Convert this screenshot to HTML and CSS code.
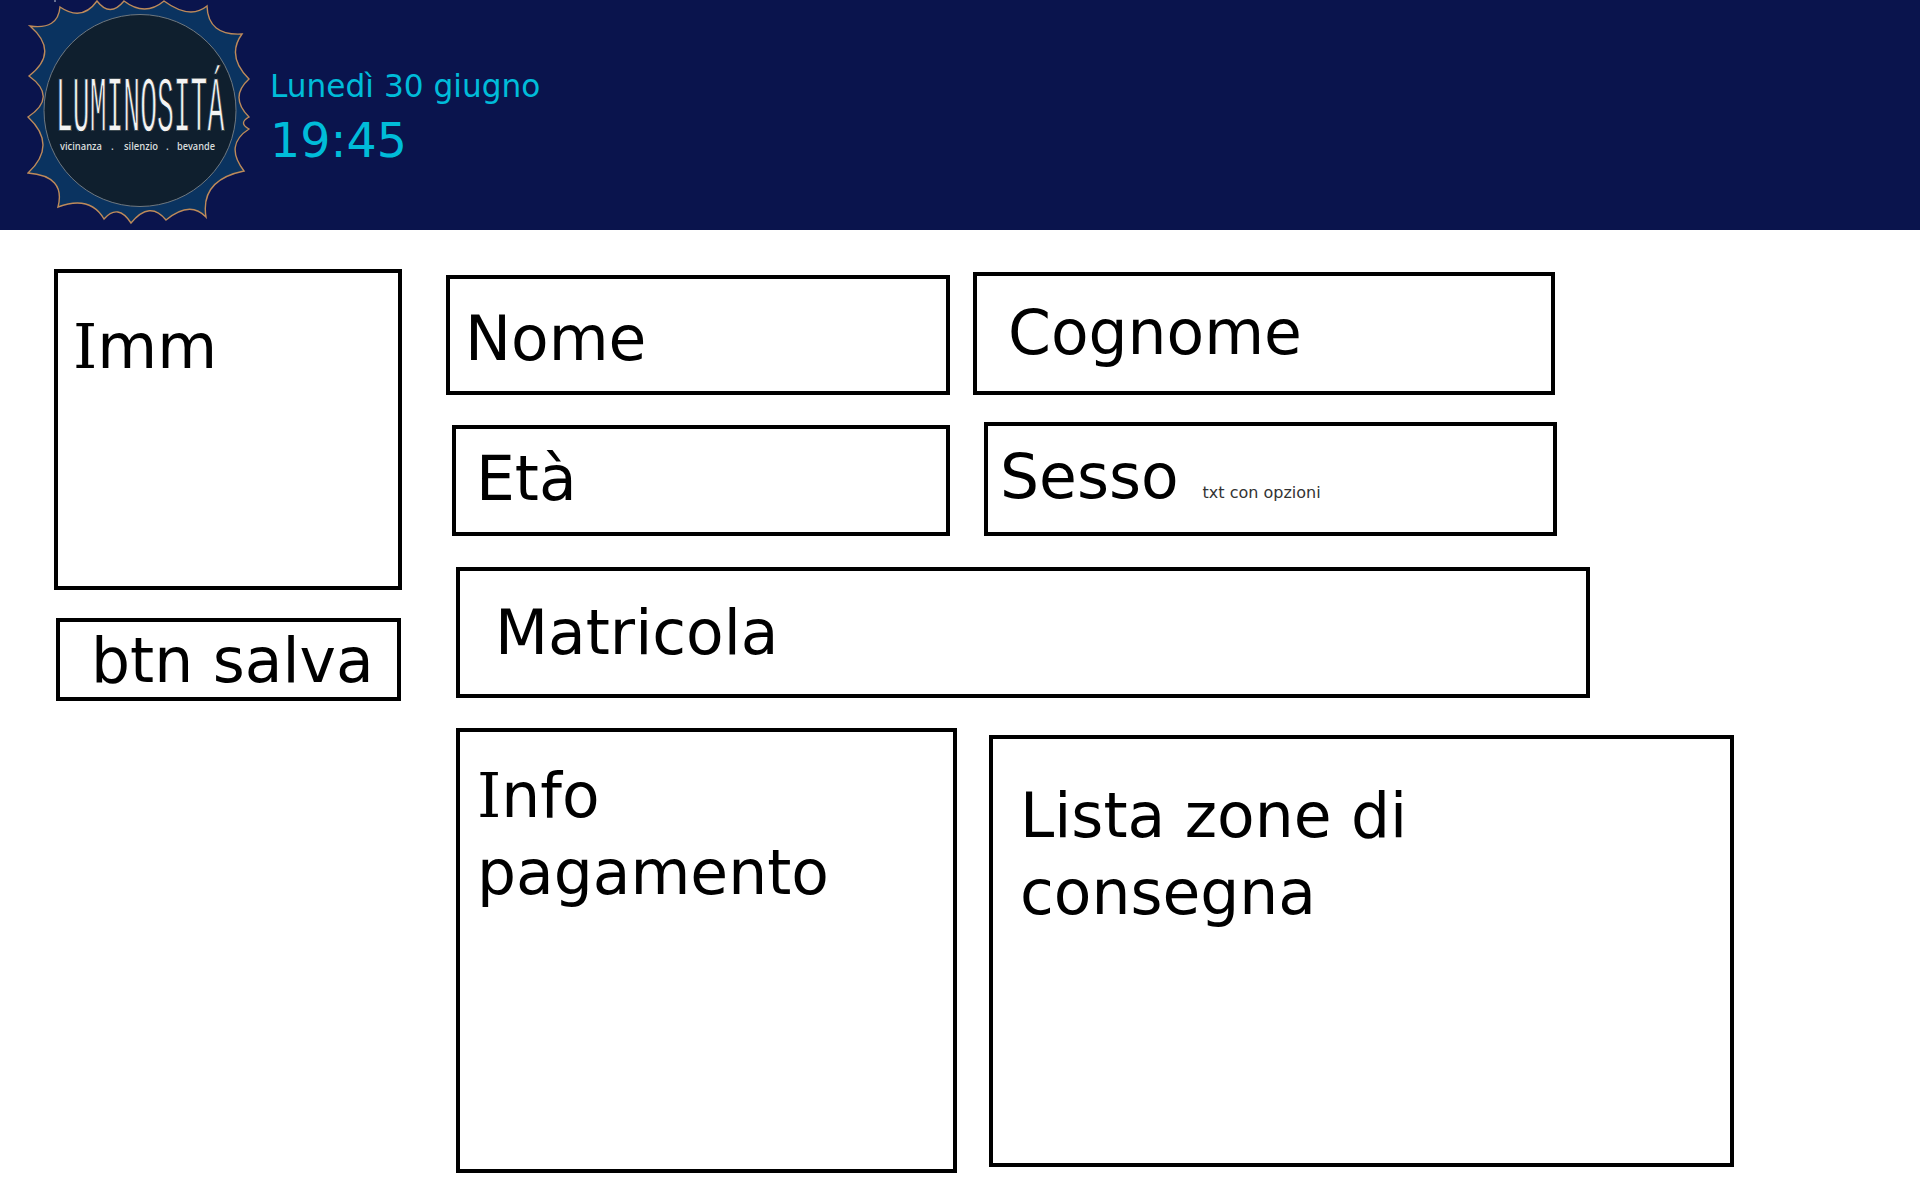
FILE: index.html
```html
<!DOCTYPE html>
<html>
<head>
<title>Profilo</title>
<link rel="stylesheet" href="styles.css">
</head>
<body>
<div class="topbar">
  <svg class="logo" viewBox="27 0 224 230" width="224" height="230">
    <circle cx="55" cy="1" r="0.8" fill="#dfe3ea"/>
    <path class="sun" d="M60 7 Q82 22 97 1 Q110 18 124 1 Q145 17 164 1 Q190 20 207 6 Q208 36 242 34 Q226 56 249 79 Q229 97 249 117 Q238 123 249 129 Q224 145 244 171 Q200 180 206 217 Q190 200 166 220 Q150 200 131 223 Q118 203 104 219 Q90 195 58 207 Q66 176 28 173 Q58 145 28 117 Q58 97 29 76 Q60 52 30 26 Q58 30 60 7 Z"/>
    <circle class="disc" cx="140" cy="110.5" r="96"/>
    <text class="logo-name" transform="translate(56 131) scale(.355 1)">LUMINOSITÁ</text>
    <text class="logo-sub" x="60" y="150" textLength="42" lengthAdjust="spacingAndGlyphs">vicinanza</text>
    <text class="logo-sub" x="111" y="150">.</text>
    <text class="logo-sub" x="124" y="150" textLength="34" lengthAdjust="spacingAndGlyphs">silenzio</text>
    <text class="logo-sub" x="166" y="150">.</text>
    <text class="logo-sub" x="177" y="150" textLength="38" lengthAdjust="spacingAndGlyphs">bevande</text>
  </svg>
  <div class="clock">
    <div class="clock-date">Lunedì 30 giugno</div>
    <div class="clock-time">19:45</div>
  </div>
</div>

<div class="content">
  <div class="side">
    <div class="box box-img"><span class="slab">I</span>mm</div>
    <div class="box box-save">btn salva</div>
  </div>
  <div class="form">
    <div class="row row-names">
      <div class="box box-nome">Nome</div>
      <div class="box box-cognome">Cognome</div>
    </div>
    <div class="row row-details">
      <div class="box box-eta">Età</div>
      <div class="box box-sesso">Sesso<span class="hint">txt con opzioni</span></div>
    </div>
    <div class="box box-matricola">Matricola</div>
    <div class="row row-lists">
      <div class="box box-info"><span class="slab">I</span>nfo pagamento</div>
      <div class="box box-zone">Lista zone di consegna</div>
    </div>
  </div>
</div>
</body>
</html>
```

FILE: styles.css
```css
body {
  margin: 0;
  font-family: "DejaVu Sans", sans-serif;
  background-color: #fff;
  color: #000;
}

.topbar {
  display: flex;
  height: 230px;
  padding-left: 27px;
  background-color: #0a144d;
}

.logo {
  flex: none;
}

.sun {
  fill: #0a3360;
  stroke: #bd8a5a;
  stroke-width: 1.4;
}

.disc {
  fill: #0f1f2e;
  stroke: #6f7880;
  stroke-width: 1;
}

.logo-name {
  font-family: "Liberation Mono", monospace;
  font-size: 79px;
  fill: #f4f4f4;
  stroke: #0f1f2e;
  stroke-width: 1.3;
}

.logo-sub {
  font-family: "Open Sans", sans-serif;
  font-size: 10px;
  font-weight: 600;
  fill: #d8dcdc;
}

.clock {
  margin-left: 19px;
  padding-top: 64px;
  color: #00bcd9;
}

.clock-date {
  font-size: 31.2px;
  line-height: 44px;
}

.clock-time {
  font-size: 47.5px;
  line-height: 66px;
}

.content {
  display: flex;
}

.box {
  box-sizing: border-box;
  border: 4px solid #000;
  font-size: 61.5px;
  line-height: 77px;
}

.slab {
  font-family: "DejaVu Serif", serif;
}

.side {
  margin-left: 54px;
  padding-top: 39px;
}

.box-img {
  width: 348px;
  height: 321px;
  padding: 36px 0 0 15px;
}

.box-save {
  width: 345px;
  height: 83px;
  margin: 28px 0 0 2px;
  padding: 1px 0 0 31px;
}

.form {
  margin-left: 44px;
  padding-top: 42px;
}

.row {
  display: flex;
  align-items: flex-end;
}

.box-nome {
  width: 504px;
  height: 120px;
  padding: 22px 0 0 15px;
}

.box-cognome {
  width: 582px;
  height: 123px;
  margin-left: 23px;
  padding: 19px 0 0 31px;
}

.row-details {
  margin-top: 27px;
}

.box-eta {
  width: 498px;
  height: 111px;
  margin-left: 6px;
  padding: 12px 0 0 20px;
}

.box-sesso {
  width: 573px;
  height: 114px;
  margin-left: 34px;
  padding: 13px 0 0 12px;
}

.hint {
  margin-left: 24px;
  font-size: 16px;
  color: #333;
}

.box-matricola {
  width: 1134px;
  height: 131px;
  margin: 31px 0 0 10px;
  padding: 24px 0 0 35px;
}

.row-lists {
  align-items: flex-start;
  margin: 30px 0 0 10px;
}

.box-info {
  width: 501px;
  height: 445px;
  padding: 26px 40px 0 17px;
}

.box-zone {
  width: 745px;
  height: 432px;
  margin: 7px 0 0 32px;
  padding: 39px 240px 0 27px;
}
```
